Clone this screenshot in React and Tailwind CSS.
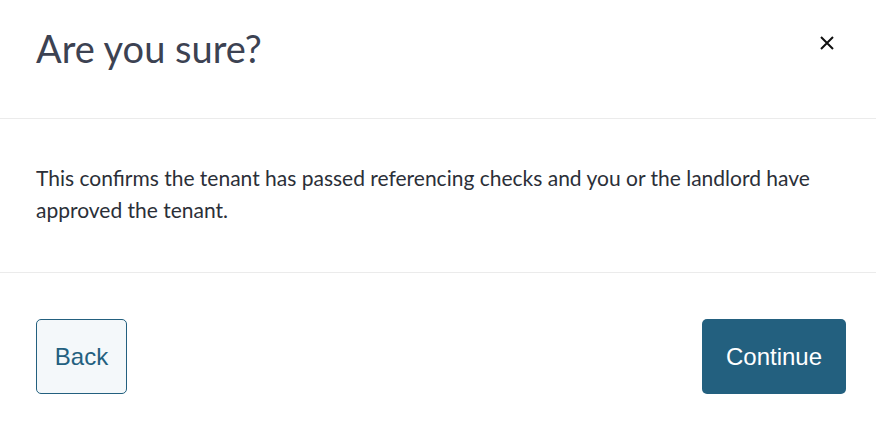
export default function App() {
  return (
    <div className="w-[876px] h-[429px] bg-white" style={{ fontFamily: "Lato, sans-serif" }}>
      <div className="h-[119px] flex items-start justify-between pl-9 pr-[42px] pt-[24px] border-b border-[#ebebeb]">
        <h1 className="text-[38px] leading-[48px] text-[#3c4252]">Are you sure?</h1>
        <button className="mt-[12px] text-[#111]" aria-label="Close">
          <svg width="14" height="14" viewBox="0 0 14 14" fill="none" stroke="currentColor" strokeWidth="2">
            <path d="M1 1L13 13M13 1L1 13" />
          </svg>
        </button>
      </div>
      <div className="h-[154px] px-9 pt-[43px] border-b border-[#ebebeb]">
        <p className="text-[21px] leading-[32px] text-[#2b2f38]">
          This confirms the tenant has passed referencing checks and you or the landlord have approved the tenant.
        </p>
      </div>
      <div className="flex justify-between pl-9 pr-[30px] pt-[46px]" style={{ fontFamily: "'Liberation Sans', Arial, sans-serif" }}>
        <button className="w-[91px] h-[75px] rounded-[5px] border border-[#23607f] bg-[#f4f8fa] text-[24px] text-[#23607f]">
          Back
        </button>
        <button className="w-[144px] h-[75px] rounded-[5px] bg-[#23607f] text-[24px] text-white">
          Continue
        </button>
      </div>
    </div>
  );
}
